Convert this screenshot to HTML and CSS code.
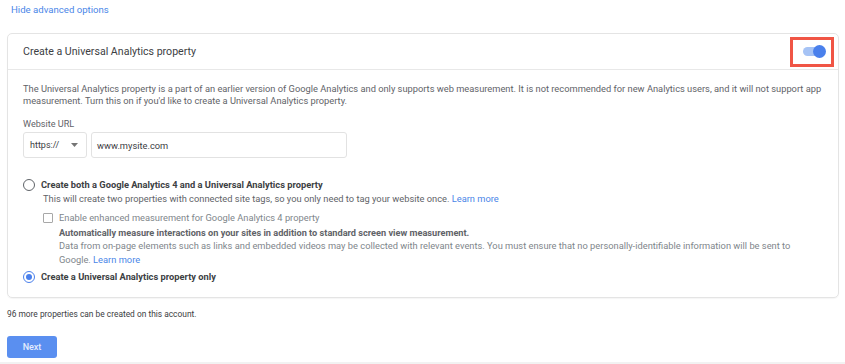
FILE: index.html
```html
<!DOCTYPE html>
<html lang="en">
<head>
    <meta charset="UTF-8">
    <meta name="viewport" content="width=device-width, initial-scale=1.0">
    <title>Property setup</title>
    <link rel="stylesheet" href="styles.css">
</head>
<body>
    <div class="page">
        <a class="adv-link" href="#">Hide advanced options</a>

        <!-- Universal Analytics card -->
        <section class="card">
            <header class="card-head">
                <h2>Create a Universal Analytics property</h2>
                <div class="highlight">
                    <span class="toggle"><span class="knob"></span></span>
                </div>
            </header>

            <div class="card-body">
                <p class="desc">The Universal Analytics property is a part of an earlier version of Google Analytics and only supports web measurement. It is not recommended for new Analytics users, and it will not support app measurement. Turn this on if you'd like to create a Universal Analytics property.</p>

                <div class="field-label">Website URL</div>
                <div class="url-row">
                    <div class="select">
                        <span>https://</span>
                        <svg width="7" height="4" viewBox="0 0 7 4"><path d="M0 0h7L3.5 4z" fill="#757575"/></svg>
                    </div>
                    <div class="input">www.mysite.com</div>
                </div>

                <div class="option first">
                    <span class="radio"></span>
                    <div class="opt-text">
                        <div class="opt-title">Create both a Google Analytics 4 and a Universal Analytics property</div>
                        <div class="opt-sub">This will create two properties with connected site tags, so you only need to tag your website once. <a href="#">Learn more</a></div>
                    </div>
                </div>

                <div class="sub-option">
                    <span class="checkbox"></span>
                    <div class="opt-text">
                        <div class="check-label">Enable enhanced measurement for Google Analytics 4 property</div>
                        <div class="check-bold">Automatically measure interactions on your sites in addition to standard screen view measurement.</div>
                        <div class="check-note">Data from on-page elements such as links and embedded videos may be collected with relevant events. You must ensure that no personally-identifiable information will be sent to Google. <a href="#">Learn more</a></div>
                    </div>
                </div>

                <div class="option">
                    <span class="radio checked"></span>
                    <div class="opt-text">
                        <div class="opt-title">Create a Universal Analytics property only</div>
                    </div>
                </div>
            </div>
        </section>

        <p class="quota">96 more properties can be created on this account.</p>
        <button class="next">Next</button>
    </div>
    <div class="strip"></div>
</body>
</html>
```

FILE: styles.css
```css
body {
    margin: 0;
    padding: 0;
    background-color: #fff;
    font-family: Roboto, "Liberation Sans", sans-serif;
    color: #5f6368;
    overflow: hidden;
}

a {
    color: #4a86e8;
    text-decoration: none;
}

.page {
    padding: 4px 6px 0 7px;
    height: 362px;
    box-sizing: border-box;
}

.adv-link {
    display: block;
    margin-left: 4px;
    font-size: 9.6px;
    line-height: 12px;
}

.card {
    margin-top: 17px;
    border: 1px solid #e4e4e4;
    border-radius: 5px;
    box-shadow: 0 1px 1px rgba(0, 0, 0, 0.04);
}

.card-head {
    display: flex;
    align-items: center;
    justify-content: space-between;
    height: 35px;
    padding: 0 4px 0 15px;
    border-bottom: 1px solid #e8e8e8;
}

h2 {
    margin: 0;
    font-size: 10.6px;
    font-weight: 400;
    color: #3c4043;
}

/* red annotation box around the switch */
.highlight {
    display: flex;
    align-items: center;
    justify-content: center;
    width: 38px;
    height: 24px;
    border: 3px solid #f05545;
}

.toggle {
    position: relative;
    width: 20px;
    height: 9px;
    margin-left: 2px;
    border-radius: 5px;
    background-color: #a6c3f5;
}

.knob {
    position: absolute;
    top: -2px;
    right: -3px;
    width: 13px;
    height: 13px;
    border-radius: 50%;
    background-color: #4a80ec;
}

.card-body {
    padding: 13px 15px 14px 15px;
}

.desc {
    margin: 0;
    font-size: 9.3px;
    line-height: 11.5px;
}

.field-label {
    margin-top: 12px;
    font-size: 9.1px;
    line-height: 12px;
}

.url-row {
    display: flex;
    gap: 4px;
    margin-top: 2px;
}

.select,
.input {
    display: flex;
    align-items: center;
    height: 24px;
    border: 1px solid #e2e2e2;
    border-radius: 3px;
    font-size: 9.3px;
    color: #3c4043;
}

.select {
    justify-content: space-between;
    width: 48px;
    padding: 0 8px 0 6px;
    font-size: 9px;
}

.input {
    width: 249px;
    padding-left: 5px;
}

.option {
    display: flex;
    align-items: flex-start;
    gap: 6px;
    margin-top: 5px;
}

.option.first {
    margin-top: 21px;
}

.radio {
    flex: none;
    position: relative;
    width: 10px;
    height: 10px;
    border: 1.3px solid #5f6368;
    border-radius: 50%;
}

.radio.checked {
    border-color: #4a80ec;
}

.radio.checked::after {
    content: "";
    position: absolute;
    top: 2px;
    left: 2px;
    width: 6px;
    height: 6px;
    border-radius: 50%;
    background-color: #4a80ec;
}

.opt-title {
    font-size: 9.3px;
    line-height: 12px;
    font-weight: 700;
    color: #3c4043;
}

.opt-sub {
    margin-top: 1px;
    margin-left: 2px;
    font-size: 9.3px;
    line-height: 13px;
}

.sub-option {
    display: flex;
    align-items: flex-start;
    gap: 6px;
    margin: 6px 0 0 20px;
}

.checkbox {
    flex: none;
    width: 8px;
    height: 8px;
    margin-top: 2px;
    border: 1px solid #a8a8a8;
    border-radius: 1px;
}

.check-label {
    font-size: 9.3px;
    line-height: 13px;
    color: #80868b;
}

.check-bold {
    margin-top: 2px;
    font-size: 9.2px;
    line-height: 13px;
    font-weight: 700;
    color: #5f6368;
}

.check-note {
    font-size: 9.3px;
    line-height: 13.5px;
    color: #80868b;
}

.quota {
    margin: 10px 0 0 0;
    font-size: 8.4px;
    line-height: 12px;
    color: #3c4043;
}

.next {
    display: block;
    margin-top: 16px;
    width: 50px;
    height: 22px;
    border: none;
    border-radius: 3px;
    background-color: #5a8ff0;
    color: #e4edfd;
    font-family: Roboto, "Liberation Sans", sans-serif;
    font-size: 9px;
    font-weight: 500;
}

.strip {
    height: 2px;
    background-color: #f2f2f2;
}
```
